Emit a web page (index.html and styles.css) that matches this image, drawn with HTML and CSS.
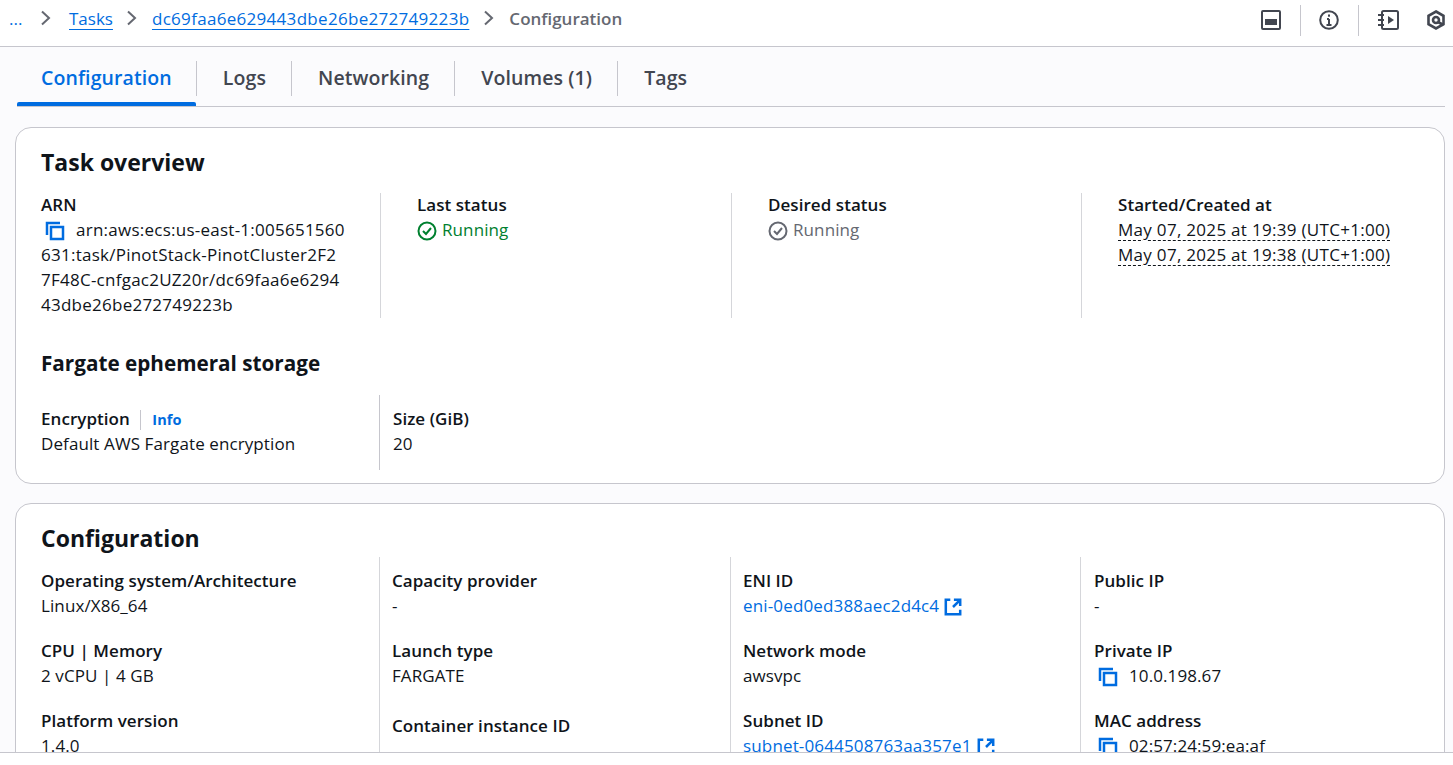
FILE: index.html
```html
<!DOCTYPE html>
<html>
<head>
    <title>Task configuration</title>
    <link rel="stylesheet" href="styles.css">
</head>
<body>
    <div class="page">
        <header class="topbar">
            <nav class="crumbs">
                <a class="crumb-more">...</a>
                <svg class="chev chev-first" viewBox="0 0 12 16"><path d="M2 1.5L9 8l-7 6.5"/></svg>
                <a class="crumb-link crumb-short">Tasks</a>
                <svg class="chev" viewBox="0 0 12 16"><path d="M2 1.5L9 8l-7 6.5"/></svg>
                <a class="crumb-link">dc69faa6e629443dbe26be272749223b</a>
                <svg class="chev" viewBox="0 0 12 16"><path d="M2 1.5L9 8l-7 6.5"/></svg>
                <span class="crumb-current">Configuration</span>
            </nav>
            <div class="tools">
                <svg class="tool" viewBox="0 0 20 20"><rect x="1" y="1" width="18" height="18" rx="1"/><rect class="solid" x="4" y="9" width="12" height="6"/></svg>
                <i class="tool-sep"></i>
                <svg class="tool" viewBox="0 0 20 20"><circle cx="10" cy="10" r="8.8"/><path d="M10 9v6M7.5 15h5M8 9h2"/><rect class="solid" x="9" y="4.5" width="2" height="2.2"/></svg>
                <i class="tool-sep"></i>
                <svg class="tool tool-book" viewBox="0 0 22 20"><rect x="5" y="1" width="16" height="18" rx="1.5"/><path d="M1 5h6M1 10h6M1 15h6"/><path class="solid" d="M11 6l6 4-6 4z"/></svg>
                <svg class="tool tool-last" viewBox="0 0 20 20"><path class="thick" d="M10 1.5l7.5 4.3v8.4L10 18.5l-7.5-4.3V5.8z"/><circle class="thick" cx="10" cy="10" r="3"/><path class="thick" d="M12 12l5.5 3"/></svg>
            </div>
        </header>

        <main class="content">
            <div class="tabs">
                <a class="tab tab-active">Configuration</a>
                <a class="tab">Logs</a>
                <a class="tab">Networking</a>
                <a class="tab">Volumes (1)</a>
                <a class="tab">Tags</a>
            </div>

            <section class="card card-overview">
                <h2>Task overview</h2>
                <div class="cols cols-wide">
                    <div class="col">
                        <div class="label">ARN</div>
                        <div class="value arn">
                            <svg class="copy" viewBox="0 0 20 20"><path d="M2 14V2h13"/><rect x="6" y="6" width="12" height="12"/></svg>arn:aws:ecs:us-east-1:005651560 631:task/PinotStack-PinotCluster2F2 7F48C-cnfgac2UZ20r/dc69faa6e6294 43dbe26be272749223b
                        </div>
                    </div>
                    <div class="col">
                        <div class="label">Last status</div>
                        <div class="value status-ok">
                            <svg class="status-icon" viewBox="0 0 20 20"><circle cx="10" cy="10" r="8.5"/><path d="M6 10l3 3 5-6"/></svg>Running
                        </div>
                    </div>
                    <div class="col">
                        <div class="label">Desired status</div>
                        <div class="value status-muted">
                            <svg class="status-icon" viewBox="0 0 20 20"><circle cx="10" cy="10" r="8.5"/><path d="M6 10l3 3 5-6"/></svg>Running
                        </div>
                    </div>
                    <div class="col">
                        <div class="label">Started/Created at</div>
                        <div class="value date"><span class="dotted">May 07, 2025 at 19:39 (UTC+1:00)</span></div>
                        <div class="value date"><span class="dotted">May 07, 2025 at 19:38 (UTC+1:00)</span></div>
                    </div>
                </div>

                <h3>Fargate ephemeral storage</h3>
                <div class="storage">
                    <div class="col-plain">
                        <div class="label">Encryption <span class="info">Info</span></div>
                        <div class="value">Default AWS Fargate encryption</div>
                    </div>
                    <div class="col-plain col-size">
                        <div class="label">Size (GiB)</div>
                        <div class="value">20</div>
                    </div>
                </div>
            </section>

            <section class="card card-config">
                <h2>Configuration</h2>
                <div class="cols cols-tight">
                    <div class="col">
                        <div class="field"><div class="label">Operating system/Architecture</div><div class="value">Linux/X86_64</div></div>
                        <div class="field"><div class="label">CPU | Memory</div><div class="value">2 vCPU | 4 GB</div></div>
                        <div class="field"><div class="label">Platform version</div><div class="value">1.4.0</div></div>
                    </div>
                    <div class="col">
                        <div class="field"><div class="label">Capacity provider</div><div class="value">-</div></div>
                        <div class="field"><div class="label">Launch type</div><div class="value">FARGATE</div></div>
                        <div class="field field-tall"><div class="label">Container instance ID</div><div class="value">-</div></div>
                    </div>
                    <div class="col">
                        <div class="field"><div class="label">ENI ID</div><div class="value"><a class="link">eni-0ed0ed388aec2d4c4</a><svg class="ext" viewBox="0 0 20 20"><path d="M7 2H2v16h16v-5M11 2h7v7M18 2l-8 8"/></svg></div></div>
                        <div class="field"><div class="label">Network mode</div><div class="value">awsvpc</div></div>
                        <div class="field"><div class="label">Subnet ID</div><div class="value"><a class="link">subnet-0644508763aa357e1</a><svg class="ext" viewBox="0 0 20 20"><path d="M7 2H2v16h16v-5M11 2h7v7M18 2l-8 8"/></svg></div></div>
                    </div>
                    <div class="col">
                        <div class="field"><div class="label">Public IP</div><div class="value">-</div></div>
                        <div class="field"><div class="label">Private IP</div><div class="value"><svg class="copy" viewBox="0 0 20 20"><path d="M2 14V2h13"/><rect x="6" y="6" width="12" height="12"/></svg>10.0.198.67</div></div>
                        <div class="field"><div class="label">MAC address</div><div class="value"><svg class="copy" viewBox="0 0 20 20"><path d="M2 14V2h13"/><rect x="6" y="6" width="12" height="12"/></svg>02:57:24:59:ea:af</div></div>
                    </div>
                </div>
            </section>
        </main>

        <footer class="bottom"></footer>
    </div>
</body>
</html>
```

FILE: styles.css
```css
* {
    margin: 0;
    padding: 0;
    box-sizing: border-box;
}

html, body {
    height: 100%;
    overflow: hidden;
}

body {
    background-color: #fff;
    color: #0f141a;
    font-family: 'Open Sans', 'Noto Sans', sans-serif;
    font-size: 17px;
    line-height: 25px;
}

.page {
    display: flex;
    flex-direction: column;
    height: 765px;
}

/* Top bar */
.topbar {
    flex: none;
    height: 47px;
    padding-bottom: 8px;
    display: flex;
    align-items: center;
    justify-content: space-between;
    background-color: #fff;
    border-bottom: 1px solid #c6c6cd;
}

.crumbs {
    display: flex;
    align-items: center;
    padding-left: 9px;
    margin-top: -2px;
}

.crumb-more {
    color: #006ce0;
    width: 31px;
}

.chev {
    width: 12px;
    height: 16px;
    margin-right: 14px;
    fill: none;
    stroke: #656871;
    stroke-width: 2;
}

.chev-first {
    margin-right: 17px;
}

.crumb-link {
    color: #006ce0;
    text-decoration: underline;
    text-underline-offset: 4px;
    letter-spacing: 0.3px;
    margin-right: 14px;
}

.crumb-short {
    letter-spacing: 0;
    margin-right: 13px;
}

.crumb-current {
    color: #656871;
    font-weight: 600;
}

.tools {
    display: flex;
    align-items: center;
    margin-top: 2px;
    padding-right: 7px;
}

.tool {
    width: 20px;
    height: 20px;
    flex: none;
    fill: none;
    stroke: #424650;
    stroke-width: 2;
}

.tool .solid {
    fill: #424650;
    stroke: none;
}

.tool .thick {
    stroke-width: 2.6;
}

.tool-book {
    width: 22px;
}

.tool-sep {
    width: 1px;
    height: 31px;
    margin: 0 18px 0 19px;
    background-color: #c6c6cd;
}

.tool-last {
    margin-left: 27px;
}

/* Tabs */
.content {
    flex: 1;
    min-height: 0;
    overflow: hidden;
    padding: 13px 8px 0 15px;
    background-color: #fbfbfd;
}

.tabs {
    display: flex;
    margin-left: 2px;
    height: 47px;
    border-bottom: 1px solid #c6c6cd;
}

.tab {
    position: relative;
    padding: 3px 25px 0 26px;
    height: 35px;
    margin-top: 1px;
    color: #424650;
    font-size: 19.5px;
    font-weight: 600;
    letter-spacing: 0.1px;
    line-height: 28px;
    border-right: 1px solid #c6c6cd;
}

.tab:first-child {
    padding-left: 24px;
    padding-right: 24px;
}

.tab:last-child {
    border-right: none;
}

.tab-active {
    color: #006ce0;
}

.tab-active::after {
    content: "";
    position: absolute;
    left: 0;
    right: 0;
    top: 41px;
    height: 4px;
    border-radius: 2px 2px 0 0;
    background-color: #006ce0;
}

/* Cards */
.card {
    background-color: #fff;
    border: 1px solid #c6c6cd;
    border-radius: 16px;
    padding: 0 25px;
}

.card-overview {
    margin-top: 20px;
    height: 357px;
}

.card-config {
    margin-top: 19px;
    height: 400px;
}

h2 {
    font-size: 23px;
    font-weight: 700;
    line-height: 30px;
    padding-top: 19px;
}

h3 {
    font-size: 20.7px;
    font-weight: 700;
    line-height: 30px;
    margin-top: 30px;
}

.cols {
    display: grid;
}

.cols-wide {
    grid-template-columns: 339px 351px 350px 1fr;
    margin-top: 16px;
    height: 125px;
}

.cols-wide .label {
    margin-top: -1px;
}

.cols-tight {
    grid-template-columns: 338px 351px 350px 1fr;
    margin-top: 4px;
    height: 400px;
}

.col {
    border-left: 1px solid #d5d6da;
}

.cols-wide .col {
    padding-left: 36px;
}

.cols-tight .col {
    padding-left: 12px;
}

.cols-tight .col:last-child {
    padding-left: 13px;
}

.cols .col:first-child {
    border-left: none;
    padding-left: 0;
    padding-right: 20px;
}

.label {
    font-weight: 600;
    letter-spacing: 0.05px;
}

.value {
    white-space: nowrap;
    letter-spacing: 0.1px;
}

.field {
    height: 70px;
    padding-top: 11px;
}

.field-tall {
    padding-top: 16px;
}

.arn {
    white-space: normal;
    letter-spacing: 0.25px;
}

.copy {
    width: 20px;
    height: 20px;
    margin: 0 11px 0 4px;
    vertical-align: -5px;
    fill: none;
    stroke: #006ce0;
    stroke-width: 2.5;
}

.status-icon {
    width: 20px;
    height: 20px;
    margin-right: 5px;
    vertical-align: -5px;
    fill: none;
    stroke: currentColor;
    stroke-width: 2;
}

.status-ok {
    color: #00802f;
}

.status-muted {
    color: #656871;
}

.date {
    letter-spacing: 0.3px;
}

.dotted {
    text-decoration: underline dashed 1px;
    text-underline-offset: 4px;
}

.storage {
    display: flex;
    margin-top: 17px;
    height: 75px;
}

.col-plain {
    width: 338px;
    padding-top: 11px;
}

.col-size {
    border-left: 1px solid #c6c6cd;
    padding-left: 13px;
}

.info {
    display: inline-block;
    margin-left: 6px;
    padding-left: 11px;
    font-size: 14.5px;
    color: #006ce0;
    font-weight: 700;
    line-height: 20px;
    border-left: 1px solid #c6c6cd;
}

.link {
    color: #006ce0;
    letter-spacing: 0.15px;
}

.ext {
    width: 18px;
    height: 18px;
    margin-left: 5px;
    vertical-align: -4px;
    fill: none;
    stroke: #006ce0;
    stroke-width: 2.8;
}

.bottom {
    flex: none;
    height: 13px;
    background-color: #fff;
    border-top: 1px solid #c6c6cd;
}
```
